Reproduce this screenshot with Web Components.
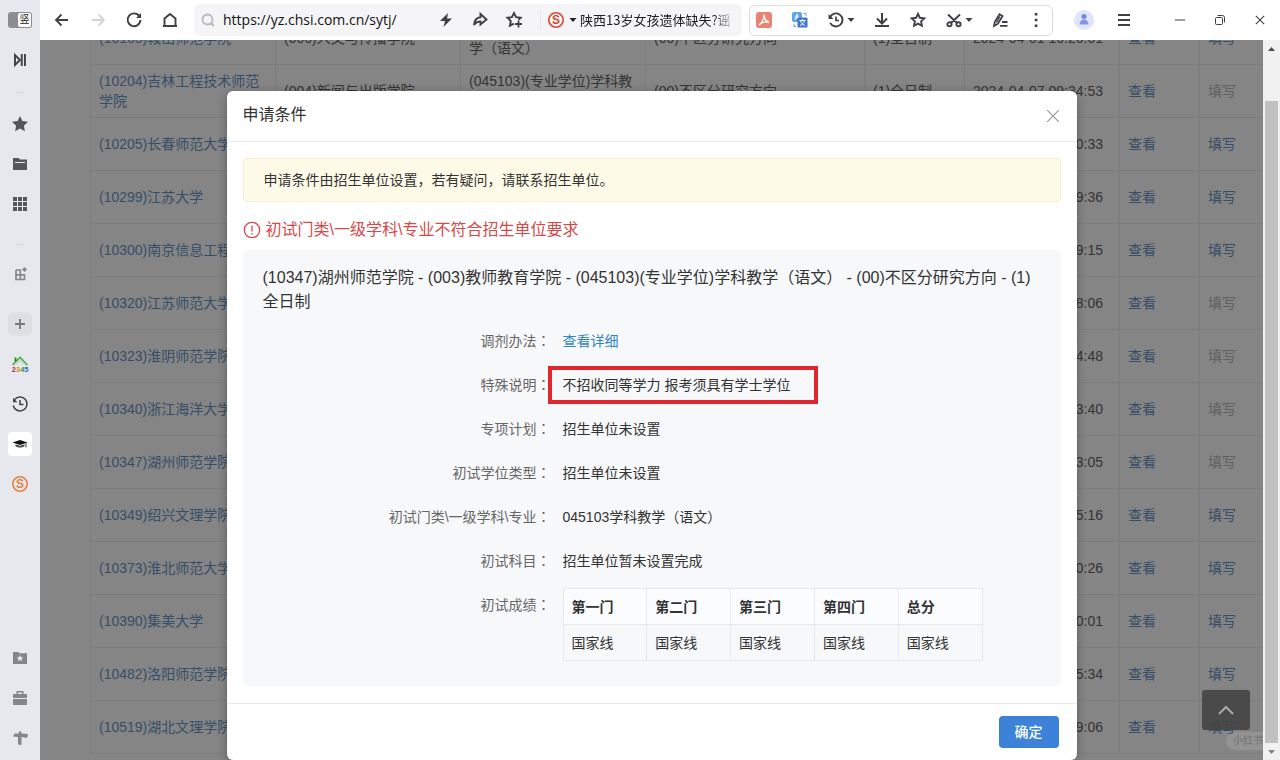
<!DOCTYPE html>
<html lang="zh-CN">
<head>
<meta charset="utf-8">
<title>申请条件</title>
<style>
html, body { margin: 0; height: 100%; }
body { overflow: hidden; font-family: "Liberation Sans", "Noto Sans CJK SC", sans-serif; font-size: 14px; line-height: 20px; color: #333; }
</style>
</head>
<body>
<browser-window>
  <side-bar slot="side"></side-bar>
  <tool-bar slot="top"></tool-bar>
  <web-view slot="view">
    <result-table></result-table>
    <condition-dialog slot="dialog" heading="申请条件">
      <notice-bar>申请条件由招生单位设置，若有疑问，请联系招生单位。</notice-bar>
      <error-line>初试门类\一级学科\专业不符合招生单位要求</error-line>
      <detail-panel>
        <span slot="title">(10347)湖州师范学院 - (003)教师教育学院 - (045103)(专业学位)学科教学（语文） - (00)不区分研究方向 - (1)全日制</span>
        <detail-row label="调剂办法"><text-link>查看详细</text-link></detail-row>
        <detail-row label="特殊说明" marked>不招收同等学力 报考须具有学士学位</detail-row>
        <detail-row label="专项计划">招生单位未设置</detail-row>
        <detail-row label="初试学位类型">招生单位未设置</detail-row>
        <detail-row label="初试门类\一级学科\专业">045103学科教学（语文）</detail-row>
        <detail-row label="初试科目">招生单位暂未设置完成</detail-row>
        <detail-row label="初试成绩"><score-table></score-table></detail-row>
      </detail-panel>
    </condition-dialog>
  </web-view>
</browser-window>

<script>
const define = (name, html, setup) => {
  const template = document.createElement('template');
  template.innerHTML = html;
  customElements.define(name, class extends HTMLElement {
    constructor() {
      super();
      this.attachShadow({ mode: 'open' }).append(template.content.cloneNode(true));
    }
    connectedCallback() { if (setup) setup(this, this.shadowRoot); }
  });
};

/* ---------- icons ---------- */
const stroke = (d, w = 2) => `<path d="${d}" fill="none" stroke="currentColor" stroke-width="${w}"/>`;
const solid = d => `<path d="${d}" fill="currentColor"/>`;
const ICONS = {
  back: stroke('M16 10H4.500M9.500 4.500 4 10l5.500 5.500', 1.800),
  forward: stroke('M4 10h11.500M10.500 4.500 16 10l-5.500 5.500', 1.800),
  reload: stroke('M15.300 6.200A6.400 6.400 0 1 0 16.400 10', 1.900) + solid('M17 3v5h-5z'),
  home: stroke('M4.500 16V8.500L10 4l5.500 4.500V16', 1.900) + solid('M3 15h14v2H3z'),
  search: stroke('M9.500 4.500a5 5 0 1 0 0 10 5 5 0 0 0 0-10M13 13l3 3', 1.800),
  bolt: solid('M12 3 4 11h5l-1.500 6L16 8.500h-5z'),
  share: stroke('M10.500 4 16.500 9.500l-6 5V11.500C7.500 11.500 5.500 12.500 4 15c.3-4.500 2.500-7.500 6.500-7.800z', 1.900),
  staradd: stroke('M10 13.600 5.900 15.700l.9-4.700L3.400 7.800l4.500-.6L10 3l2.100 4.200 4.500.6-2 1.900', 1.900) + stroke('M14.500 10.500v7M11 14h7', 1.800),
  download: stroke('M10 3v10M5 8.500l5 5 5-5', 2) + stroke('M3 16h14', 2),
  star: stroke('M10 3.800l1.900 4 4.400.6-3.200 3 .8 4.400L10 13.700l-3.900 2.100.8-4.400-3.200-3 4.400-.6z', 1.900),
  starfill: solid('M10 2l2.400 5.100 5.600.7-4.100 3.900 1 5.600L10 14.600l-4.900 2.700 1-5.600L2 7.800l5.600-.7z'),
  cut: stroke('M4 4.500 13 13M16 4.500 7 13M5.500 12.200a2.100 2.100 0 1 0 0 4.200 2.100 2.100 0 0 0 0-4.200M14.500 12.200a2.100 2.100 0 1 0 0 4.200 2.100 2.100 0 0 0 0-4.200', 1.900),
  edit: stroke('M4 16l.8-4L9.500 4.200l3 1.800L8 13.700zM12 12h5.500M10 15.800h7.500', 1.800) + stroke('M9.800 6.500 6.500 12.500', 1.400),
  more: solid('M8.800 3h2.600v2.600H8.800zM8.800 8.700h2.600v2.600H8.800zM8.800 14.400h2.600V17H8.800z'),
  history: stroke('M4 7.500A6.500 6.500 0 1 1 4.200 12.800', 1.900) + solid('M2.500 4v5h5z') + stroke('M10 6.500V10.500h3', 1.700),
  clock: stroke('M4.500 5.600A7 7 0 1 1 3.200 11.500', 1.500) + stroke('M10 6v4.600h3.500', 1.500) + solid('M3 3.800v4.400h4.400z'),
  menu: solid('M4 4h12v2H4zM4 9h12v2H4zM4 14h12v2H4z'),
  min: stroke('M5 10h10', 1),
  restore: stroke('M5.500 8.500a1 1 0 0 1 1-1h5a1 1 0 0 1 1 1v5a1 1 0 0 1-1 1h-5a1 1 0 0 1-1-1zM7.500 5.500h5a2 2 0 0 1 2 2v5', 1),
  close: stroke('M5.800 5.800l8.400 8.400M14.200 5.800l-8.400 8.400', 1.100),
  caret: solid('M6.500 8h7L10 12z'),
  playpause: stroke('M5 5v10l5-5z', 1.900) + solid('M10.800 4h1.900v12h-1.900zM14 4h1.900v12H14z'),
  folder: solid('M3 4h5.500l1.500 1.500h7V16H3z') + '<path d="M5 8.500h10" stroke="#e7e8ee" stroke-width="1"/>',
  grid: solid('M3 3h4v4H3zM8 3h4v4H8zM13 3h4v4h-4zM3 8h4v4H3zM8 8h4v4H8zM13 8h4v4h-4zM3 13h4v4H3zM8 13h4v4H8zM13 13h4v4h-4z'),
  widgets: stroke('M6 6v9.500h8.500v-4.700H6M6 6h4.300v9.500', 1.700) + solid('M14.500 3l2.500 2.500L14.500 8 12 5.500z'),
  plus: stroke('M10 5v10M5 10h10', 1.800),
  favfolder: solid('M3 4h5.500l1 1.300H17V16H3z') + '<path d="M10 7l1 2.200 2.300.2-1.700 1.600.5 2.300L10 12.100l-2.100 1.200.5-2.300L6.700 9.400 9 9.200z" fill="#e7e8ee"/>',
  brief: solid('M6.500 3h7v3H17v4H3V6h3.500zM3 11h14v6H3z') + '<path d="M8 4.500h4V6H8z" fill="#e7e8ee"/>',
  signpost: solid('M9 3l2.500 1v1.500l6.500.5-1 4-5.500-1V17l-3.500-.5V9L3 8.500l1.500-3H9z'),
  cap: '<path d="M2.500 8.500 10 6l7.500 2.500L10 11z" fill="#111"/><path d="M5.500 10.200v2c2 1.700 7 1.700 9 0v-2L10 11.800z" fill="#455052"/><path d="M16 9v4.500" stroke="#445" stroke-width="1"/>',
  user: '<circle cx="10" cy="10" r="10" fill="#dfe5fb"/><circle cx="10" cy="6.500" r="2.500" fill="#7286dc"/><path d="M5.500 14.500c0-3 1.800-5 4.500-5s4.500 2 4.500 5z" fill="#7f95e6"/>',
  pdf: '<rect x="2" y="2" width="16" height="16" rx="3" fill="#ea8371"/><path d="M10 4.500c-.2 4 2 6.500 5 8-3.500-1.200-7-.6-10 2.500C8.500 12.500 10 9 10 4.500z" fill="none" stroke="#fff" stroke-width="1.400"/>',
  translate: '<rect x="2" y="2" width="10" height="10" rx="2" fill="#5ba2f0"/><path d="M5 9.500 7 4.500 9 9.500M5.500 8h3" stroke="#fff" fill="none" stroke-width="1.200"/><rect x="7.500" y="7.500" width="10" height="10" rx="1" fill="#3f74d0"/><path d="M9.500 10.500h6M12.500 9v1.500M14.500 10.500c-.5 2.500-2 4-4.500 5M10.500 10.500c.5 2.500 2 4 4.500 5" stroke="#fff" fill="none" stroke-width="1"/><path d="M13.500 3.500h2.500V6M4 14v2.500h2" fill="none" stroke="#5ba2f0"/>',
  house: '<path d="M2.500 11 10 3.500 17.500 11" fill="none" stroke="#4cae4f" stroke-width="1.700"/><path d="M5 11.500 10 6.500l5 5" fill="none" stroke="#9fd69f" stroke-width="1"/><path d="M4.500 3.500h2v4h-2z" fill="#2e8b35"/><text y="18" font-family="Liberation Sans" font-size="7.500" font-weight="700"><tspan x="1.800" fill="#a33">2</tspan><tspan fill="#e08a1e">3</tspan><tspan fill="#399a3f">4</tspan><tspan fill="#2b66b8">5</tspan></text>',
  sogou: '<circle cx="10" cy="10" r="7.200" fill="none" stroke="currentColor" stroke-width="1.600"/><text x="10" y="14.300" text-anchor="middle" font-family="Liberation Sans" font-size="12" font-weight="700" fill="currentColor">S</text>',
};
define('ui-icon', `<style>
:host { display: block; flex: none; width: 20px; height: 20px; }
svg { display: block; width: 100%; height: 100%; }
</style><svg viewBox="0 0 20 20" aria-hidden="true"></svg>`,
(el, root) => { root.querySelector('svg').innerHTML = ICONS[el.getAttribute('name')] || ''; });

/* Full-width punctuation whose mark sits in the middle of its square. */
define('full-mark', `<style>:host { display: inline; font-family: "Noto Sans CJK TC", sans-serif; line-height: 0; }</style><slot></slot>`,
(el) => { el.lang = 'zh-TW'; });

define('text-link', `<style>
:host { display: inline; }
a { color: var(--link, #3185c5); text-decoration: none; }
:host([off]) a { color: #bbb; }
</style><a href="#"><slot></slot></a>`);

/* ---------- window ---------- */
define('browser-window', `<style>
:host { display: grid; grid-template: 40px minmax(0, 1fr) / 40px minmax(0, 1fr); height: 100vh; }
.side { grid-row: 1 / 3; display: grid; }
.cell { display: grid; min-width: 0; min-height: 0; }
</style>
<div class="side"><slot name="side"></slot></div>
<div class="cell"><slot name="top"></slot></div>
<div class="cell"><slot name="view"></slot></div>`);

define('side-bar', `<style>
:host { display: flex; flex-direction: column; align-items: center; background: #e7e8ee; color: #55565a; }
button { all: unset; display: grid; place-items: center; width: 24px; height: 24px; margin: 8px 0; border-radius: 4px; }
.toggle { display: flex; justify-content: flex-end; box-sizing: border-box; height: 16px; margin: 12px 0; padding: 1px; border-radius: 3px; background: #8d8d91; }
.toggle span { width: 13px; height: 14px; border-radius: 2px; background: #fff; color: #222; font-size: 10px; line-height: 14px; text-align: center; }
hr { width: 8px; margin: 12px 0 11px; border: 0; border-top: 1px solid #d5d6dc; }
.low { margin: 20px 0 9px; }
.group { margin-top: 10px; display: flex; flex-direction: column; }
.dark { color: #3f4044; }
.soft { color: #85868a; }
.plus { background: #dfe0e4; color: #77787c; border-radius: 6px; }
.on { background: #fff; }
.sogou { color: #e2833f; }
.end { margin: auto 0 2px; display: flex; flex-direction: column; }
</style>
<button class="toggle" aria-label="竖向标签"><span>竖</span></button>
<button class="dark" aria-label="播放"><ui-icon name="playpause"></ui-icon></button>
<hr>
<button aria-label="收藏"><ui-icon name="starfill"></ui-icon></button>
<button aria-label="文件夹"><ui-icon name="folder"></ui-icon></button>
<button aria-label="应用"><ui-icon name="grid"></ui-icon></button>
<hr class="low">
<button class="soft" aria-label="组件"><ui-icon name="widgets"></ui-icon></button>
<div class="group">
<button class="plus" aria-label="新建"><ui-icon name="plus"></ui-icon></button>
<button aria-label="2345"><ui-icon name="house"></ui-icon></button>
<button class="dark" aria-label="历史"><ui-icon name="clock"></ui-icon></button>
<button class="on" aria-label="研招网"><ui-icon name="cap"></ui-icon></button>
<button class="sogou" aria-label="搜狗"><ui-icon name="sogou"></ui-icon></button>
</div>
<div class="end">
<button class="soft" aria-label="收藏夹"><ui-icon name="favfolder"></ui-icon></button>
<button class="soft" aria-label="工具箱"><ui-icon name="brief"></ui-icon></button>
<button class="soft" aria-label="导航"><ui-icon name="signpost"></ui-icon></button>
</div>`);

define('tool-bar', `<style>
:host { display: flex; align-items: center; background: #fff; color: #3f4043; padding: 0 10px 0 12px; }
button { all: unset; display: flex; flex: none; }
.nav { display: flex; gap: 16px; margin-right: 14px; }
.dim { color: #d3d3d5; }
.box { display: flex; align-items: center; flex: 1; height: 32px; min-width: 0; padding: 0 4px; border-radius: 6px; background: #f5f5f7; }
.box .dim { color: #b9b9bc; }
input { all: unset; flex: 1; min-width: 0; margin-left: 5px; color: #111; font: 14px/20px "Open Sans", sans-serif; }
.acts { display: flex; gap: 14px; padding-right: 16px; }
.news { display: flex; align-items: center; width: 198px; box-sizing: border-box; padding-left: 5px; border-left: 1px solid #e4e4e6; font: 13px/20px "Noto Sans CJK SC", sans-serif; color: #222; }
.news .red { color: #d9492f; }
.news .s { width: 14px; }
.headline { flex: 1; white-space: nowrap; -webkit-mask-image: linear-gradient(90deg, #000 84%, transparent); mask-image: linear-gradient(90deg, #000 84%, transparent); }
.ext { display: flex; align-items: center; box-sizing: border-box; height: 31px; width: 304px; margin: 0 21px 0 7px; padding: 0 6px 0 4px; justify-content: space-between; border: 1px solid #dcdcde; border-radius: 6px; }
.pair { display: flex; align-items: center; }
.s { width: 10px; height: 20px; overflow: hidden; display: flex; justify-content: center; }
.menu { margin-left: 20px; }
.win { display: flex; gap: 20px; margin-left: 36px; }
</style>
<div class="nav">
<button aria-label="后退"><ui-icon name="back"></ui-icon></button>
<button class="dim" aria-label="前进"><ui-icon name="forward"></ui-icon></button>
<button aria-label="刷新"><ui-icon name="reload"></ui-icon></button>
<button aria-label="主页"><ui-icon name="home"></ui-icon></button>
</div>
<div class="box">
<ui-icon class="dim" name="search"></ui-icon>
<input aria-label="地址" value="https://yz.chsi.com.cn/sytj/">
<div class="acts">
<button aria-label="加速"><ui-icon name="bolt"></ui-icon></button>
<button aria-label="分享"><ui-icon name="share"></ui-icon></button>
<button aria-label="加入收藏"><ui-icon name="staradd"></ui-icon></button>
</div>
<div class="news"><ui-icon class="red" name="sogou"></ui-icon><span class="s"><ui-icon name="caret"></ui-icon></span><span class="headline">陕西13岁女孩遗体缺失?谣</span></div>
</div>
<div class="ext">
<button aria-label="PDF"><ui-icon name="pdf"></ui-icon></button>
<button aria-label="翻译"><ui-icon name="translate"></ui-icon></button>
<span class="pair"><button aria-label="历史"><ui-icon name="history"></ui-icon></button><span class="s"><ui-icon name="caret"></ui-icon></span></span>
<button aria-label="下载"><ui-icon name="download"></ui-icon></button>
<button aria-label="收藏"><ui-icon name="star"></ui-icon></button>
<span class="pair"><button aria-label="截图"><ui-icon name="cut"></ui-icon></button><span class="s"><ui-icon name="caret"></ui-icon></span></span>
<button aria-label="编辑"><ui-icon name="edit"></ui-icon></button>
<button aria-label="更多"><ui-icon name="more"></ui-icon></button>
</div>
<button aria-label="用户"><ui-icon name="user"></ui-icon></button>
<button class="menu" aria-label="菜单"><ui-icon name="menu"></ui-icon></button>
<div class="win">
<button aria-label="最小化"><ui-icon name="min"></ui-icon></button>
<button aria-label="还原"><ui-icon name="restore"></ui-icon></button>
<button aria-label="关闭"><ui-icon name="close"></ui-icon></button>
</div>`);

/* ---------- page viewport with its overlay and scrollbar ---------- */
define('web-view', `<style>
:host { display: grid; grid-template-columns: minmax(0, 1fr) 17px; min-height: 0; }
.stage { position: relative; overflow: hidden; min-height: 0; background: #fff; }
.page { display: flex; flex-direction: column; justify-content: flex-end; box-sizing: border-box; height: 100%; padding: 0 0 6px 50px; --link: #6a96c8; color: #666; }
.mask { position: absolute; inset: 0; display: flex; justify-content: center; align-items: flex-start; padding-top: 51px; background: rgba(0, 0, 0, .48); }
.top { all: unset; position: absolute; right: 13px; bottom: 30px; display: grid; place-items: center; width: 48px; height: 40px; border-radius: 3px; background: rgba(68, 68, 68, .9); }
.top svg { width: 16px; height: 10px; }
.stamp { position: absolute; right: 0; bottom: 10px; padding: 0 0 0 7px; border-radius: 9px 0 0 9px; background: rgba(255, 255, 255, .12); color: rgba(60, 60, 60, .3); font-size: 10px; line-height: 18px; font-weight: 700; white-space: nowrap; }
.bar { display: flex; flex-direction: column; align-items: center; background: #f1f1f1; }
.bar i { height: 17px; display: grid; place-items: center; }
.thumb { flex: 1; width: 13px; margin-top: 44px; background: #c1c1c1; }
.bar svg { width: 7px; height: 4px; }
</style>
<div class="stage">
<div class="page"><slot></slot></div>
<div class="mask"><slot name="dialog"></slot></div>
<button class="top" aria-label="回到顶部"><svg viewBox="0 0 16 10"><path d="M1 9l7-7 7 7" fill="none" stroke="#aaa" stroke-width="2"/></svg></button>
<div class="stamp">小红书</div>
</div>
<div class="bar"><i><svg viewBox="0 0 7 4"><path d="M0 4 3.500 0 7 4z" fill="#505050"/></svg></i><div class="thumb"></div><i><svg viewBox="0 0 7 4"><path d="M0 0h7L3.500 4z" fill="#858585"/></svg></i></div>`);

const ROWS = [
  ['(10165)鞍山师范学院', '(006)人文与传播学院', '2024-04-01 16:26:01', 1],
  ['(10204)吉林工程技术师范学院', '(004)新闻与出版学院', '2024-04-07 09:34:53', 0],
  ['(10205)长春师范大学', '(002)文学院', '2024-04-07 09:30:33', 1],
  ['(10299)江苏大学', '(021)教师教育学院', '2024-04-07 09:19:36', 1],
  ['(10300)南京信息工程大学', '(015)文学院', '2024-04-07 09:29:15', 1],
  ['(10320)江苏师范大学', '(001)文学院', '2024-04-07 09:38:06', 0],
  ['(10323)淮阴师范学院', '(001)文学院', '2024-04-07 09:24:48', 0],
  ['(10340)浙江海洋大学', '(008)师范学院', '2024-04-07 09:33:40', 0],
  ['(10347)湖州师范学院', '(003)教师教育学院', '2024-04-07 09:23:05', 0],
  ['(10349)绍兴文理学院', '(005)教师教育学院', '2024-04-07 09:15:16', 1],
  ['(10373)淮北师范大学', '(001)文学院', '2024-04-07 09:20:26', 1],
  ['(10390)集美大学', '(014)师范学院', '2024-04-07 09:10:01', 1],
  ['(10482)洛阳师范学院', '(001)文学院', '2024-04-07 09:35:34', 1],
  ['(10519)湖北文理学院', '(002)文学与传媒学院', '2024-04-07 09:39:06', 1],
];
define('result-table', `<style>
:host { display: block; }
table { width: 100%; table-layout: fixed; border-collapse: separate; border-spacing: 0; border-left: 1px solid #ebedf0; color: inherit; }
td { height: 40px; padding: 6px 8px; border-right: 1px solid #ebedf0; border-bottom: 1px solid #ebedf0; vertical-align: middle; }
tr > :last-child { border-right: 0; }
</style>
<table>
<colgroup><col style="width:185px"><col style="width:185px"><col style="width:185px"><col style="width:219px"><col style="width:100px"><col style="width:155px"><col style="width:80px"><col></colgroup>
<tbody></tbody></table>`,
(el, root) => {
  root.querySelector('tbody').innerHTML = ROWS.map(([school, dept, time, open]) =>
    `<tr><td><text-link>${school}</text-link></td><td>${dept}</td><td>(045103)(专业学位)学科教学（语文）</td><td>(00)不区分研究方向</td><td>(1)全日制</td><td>${time}</td><td><text-link>查看</text-link></td><td><text-link ${open ? '' : 'off'}>填写</text-link></td></tr>`).join('');
});

/* ---------- dialog ---------- */
define('condition-dialog', `<style>
:host { display: block; width: 850px; max-width: 92%; border-radius: 6px; background: #fff; color: #333; box-shadow: 0 2px 10px rgba(0, 0, 0, .3); }
header { display: flex; align-items: center; justify-content: space-between; height: 50px; padding: 0 16px; border-bottom: 1px solid #e8eaec; }
h2 { margin: 0; padding-bottom: 2px; font-size: 16px; line-height: 24px; font-weight: 400; color: #333; }
header button { all: unset; margin-right: 2px; }
header svg { display: block; width: 12px; height: 12px; }
.body { padding: 16px 16px 17px; }
footer { display: flex; justify-content: flex-end; padding: 12px 18px; border-top: 1px solid #e8eaec; }
footer button { all: unset; box-sizing: border-box; width: 60px; height: 32px; border-radius: 4px; background: #3c82d8; color: #fff; text-align: center; font-size: 14px; line-height: 32px; font-weight: 500; }
</style>
<header><h2></h2><button aria-label="关闭"><svg viewBox="0 0 12 12"><path d="M0 0l12 12M12 0 0 12" stroke="#999" stroke-width="1.200"/></svg></button></header>
<div class="body"><slot></slot></div>
<footer><button>确定</button></footer>`,
(el, root) => { root.querySelector('h2').textContent = el.getAttribute('heading'); el.setAttribute('role', 'dialog'); });

define('notice-bar', `<style>
:host { display: block; padding: 11px 20px; border: 1px solid #f7efcf; border-radius: 3px; background: #fefae8; color: #333; }
</style><slot></slot>`);

define('error-line', `<style>
:host { display: flex; align-items: center; gap: 5px; margin: 16px 0 8px; color: #d24a4a; font-size: 16px; line-height: 24px; }
svg { width: 18px; height: 18px; }
</style>
<svg viewBox="0 0 18 18"><circle cx="9" cy="9" r="7.700" fill="none" stroke="currentColor" stroke-width="1.300"/><path d="M9 4.500v6M9 12v1.500" stroke="currentColor" stroke-width="1.300"/></svg>
<span><slot></slot></span>`);

define('detail-panel', `<style>
:host { display: block; padding: 16px 20px 25px; border-radius: 4px; background: #f7f8fa; }
h3 { margin: 0 0 16px; font-size: 16px; line-height: 24px; font-weight: 400; color: #333; }
.rows { display: grid; gap: 22px; }
</style>
<h3><slot name="title"></slot></h3><div class="rows"><slot></slot></div>`);

define('detail-row', `<style>
:host { display: grid; grid-template-columns: 288px minmax(0, 1fr); column-gap: 12px; line-height: 22px; }
.label { text-align: right; color: #666; }
.value { position: relative; color: #333; }
.ring { display: none; }
:host([marked]) .ring { display: block; position: absolute; left: -15px; top: -8px; width: 262px; height: 30px; border: 4px solid #e1262d; }
</style>
<div class="label"><span></span><full-mark>：</full-mark></div>
<div class="value"><i class="ring"></i><slot></slot></div>`,
(el, root) => { root.querySelector('.label span').textContent = el.getAttribute('label'); });

define('score-table', `<style>
:host { display: block; margin-top: -6px; }
table { width: 420px; max-width: 100%; table-layout: fixed; border-collapse: collapse; }
th, td { box-sizing: border-box; height: 36px; padding: 0 8px; border: 1px solid #e6e8eb; text-align: left; color: #333; }
th { background: #fbfcfe; font-weight: 700; }
</style>
<table><thead><tr><th>第一门</th><th>第二门</th><th>第三门</th><th>第四门</th><th>总分</th></tr></thead>
<tbody><tr><td>国家线</td><td>国家线</td><td>国家线</td><td>国家线</td><td>国家线</td></tr></tbody></table>`);
</script>
</body>
</html>
